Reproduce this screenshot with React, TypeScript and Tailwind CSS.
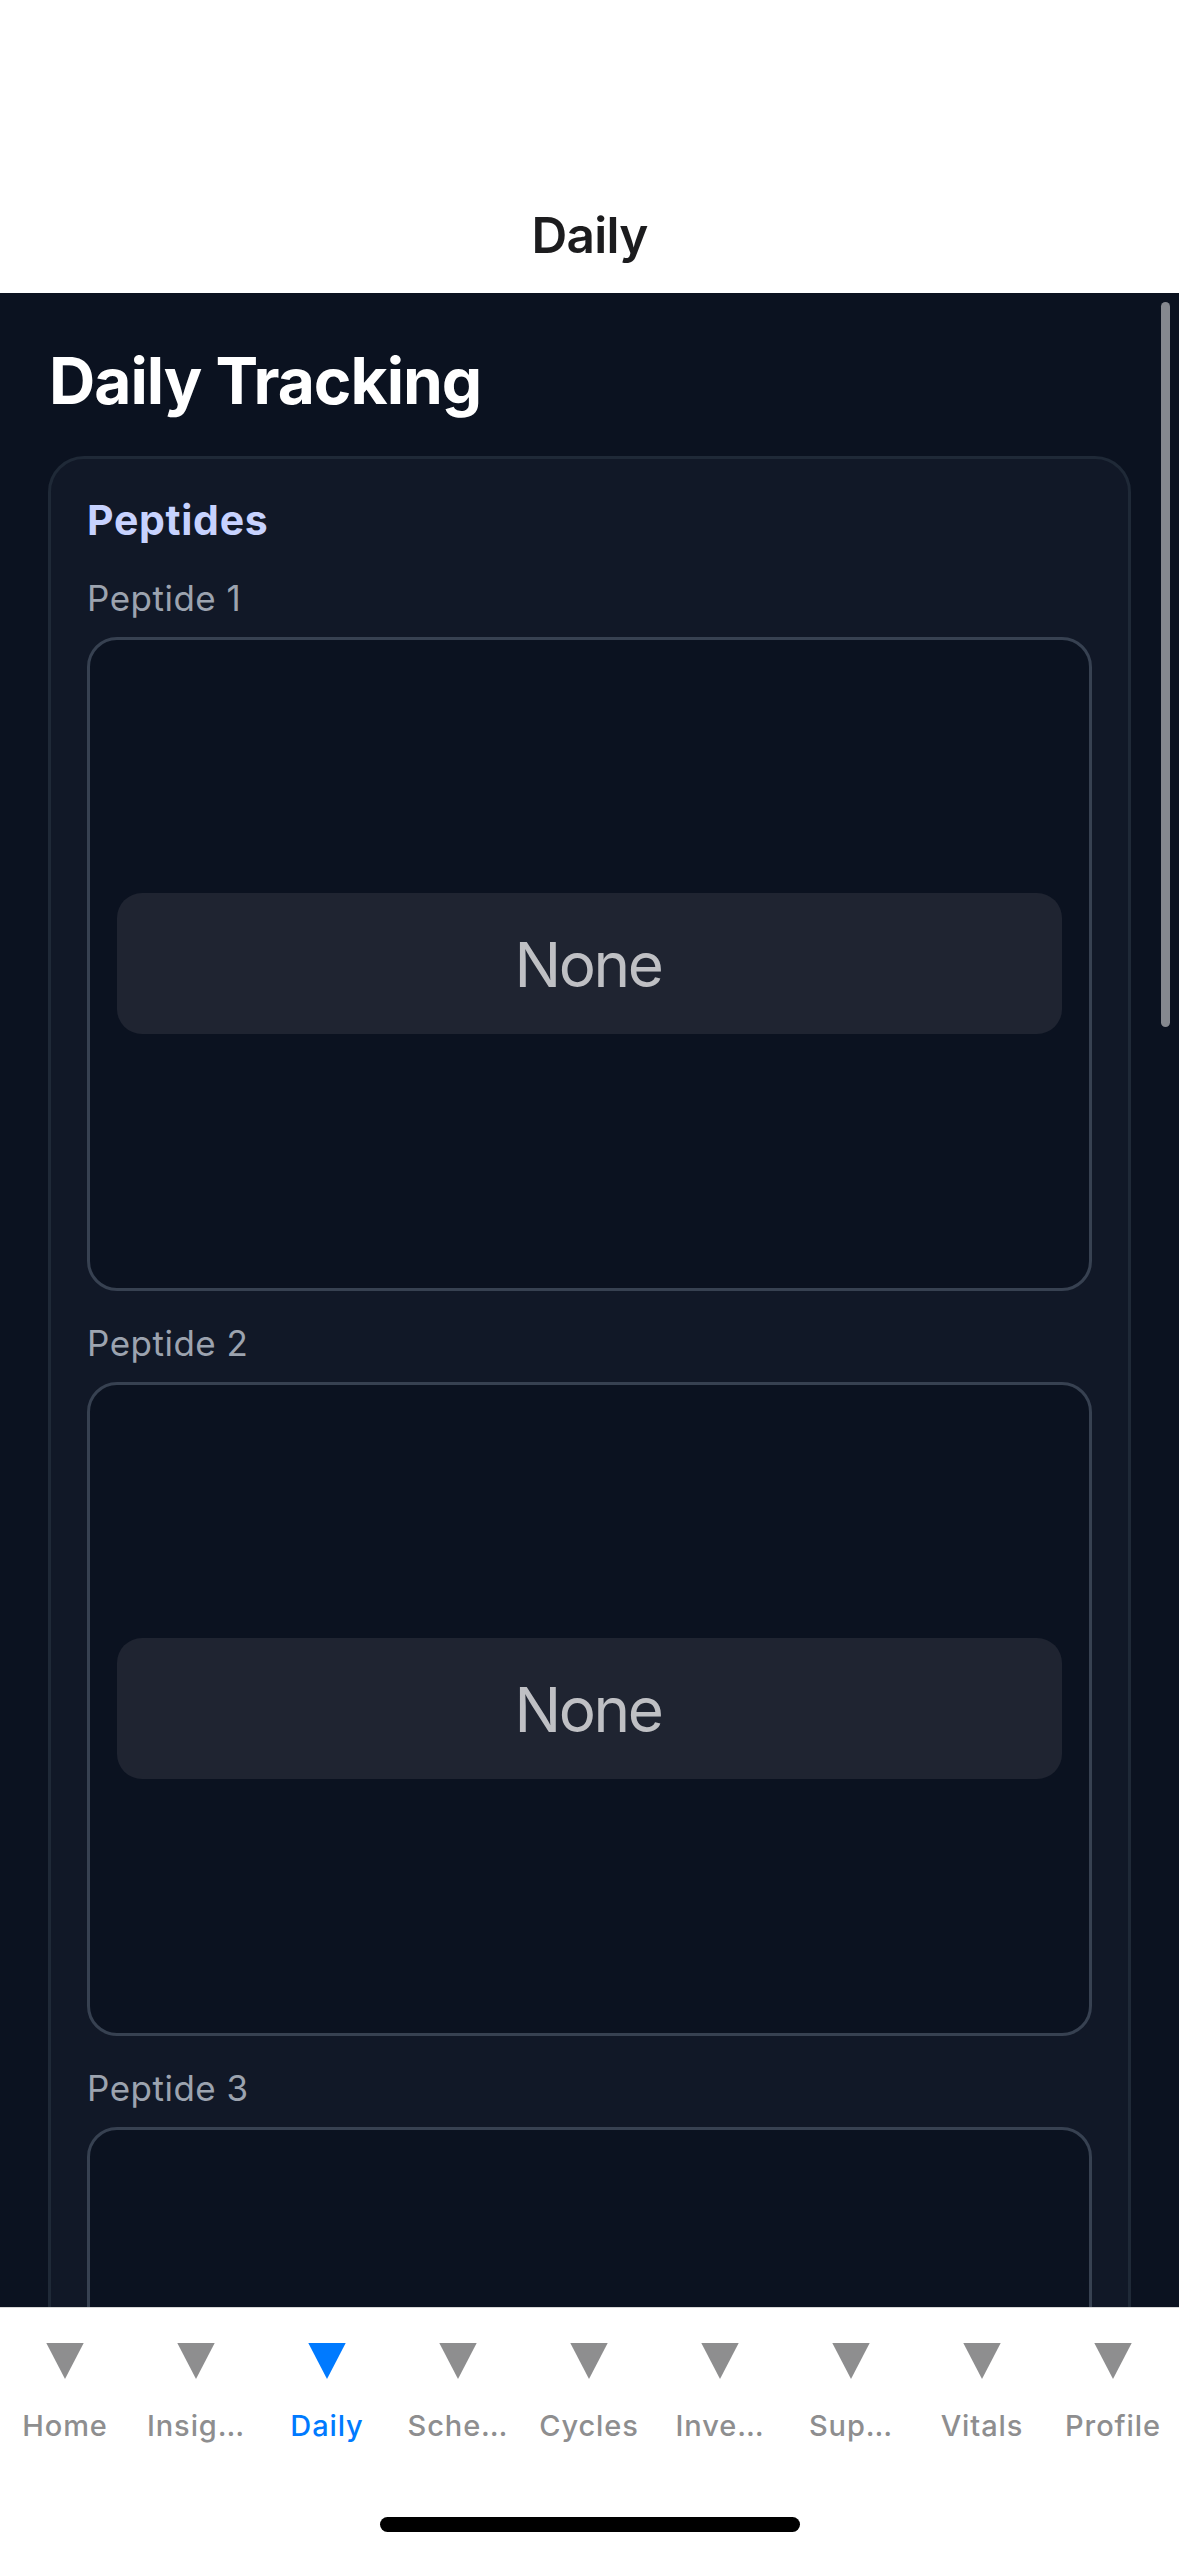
type Peptide = { label: string; value?: string };

const peptides: Peptide[] = [
  { label: "Peptide 1", value: "None" },
  { label: "Peptide 2", value: "None" },
  { label: "Peptide 3" },
];

const tabs = [
  { label: "Home" },
  { label: "Insig…" },
  { label: "Daily", active: true },
  { label: "Sche…" },
  { label: "Cycles" },
  { label: "Inve…" },
  { label: "Sup…" },
  { label: "Vitals" },
  { label: "Profile" },
];

function PeptidePicker({ label, value }: Peptide) {
  return (
    <div className="mb-[31px] shrink-0">
      <div className="mb-[18px] text-[35px] leading-[42px] tracking-[0.5px] text-[#9ca3af]">
        {label}
      </div>
      <div className="flex h-[654px] items-center rounded-[30px] border-3 border-[#374151] bg-[#0b1220] px-[27px] pb-px">
        {value && (
          <div className="flex h-[141px] flex-1 items-center justify-center rounded-[25px] bg-[#1f2431] pt-[2px] pr-[3px] text-[62px] leading-none tracking-[-2.4px] text-[#bfc0c4]">
            {value}
          </div>
        )}
      </div>
    </div>
  );
}

function TabBar() {
  return (
    <nav className="flex h-[249px] shrink-0 flex-col border-t border-[#d8d8d8] bg-white">
      <div className="grid grid-cols-9 pt-[35px]">
        {tabs.map((tab) => (
          <div
            key={tab.label}
            className={
              tab.active
                ? "flex flex-col items-center text-[#007aff]"
                : "flex flex-col items-center text-[#8e8e8f]"
            }
          >
            <svg className="mr-[2px] h-9 w-[38px]" viewBox="0 0 38 36" fill="currentColor">
              <path d="M0.3 0H37.7L19 36Z" />
            </svg>
            <span className="mt-[29px] mr-px text-[29px] leading-9 font-[480] tracking-[0.9px]">
              {tab.label}
            </span>
          </div>
        ))}
      </div>
      <div className="mx-auto mt-auto mb-6 h-[15px] w-[420px] rounded-full bg-black" />
    </nav>
  );
}

export default function App() {
  return (
    <div className="flex h-[2556px] w-[1179px] flex-col overflow-hidden bg-white font-['Inter',sans-serif]">
      <header className="h-[293px] shrink-0 pt-[177px] text-center text-[49.5px] leading-[116px] font-semibold tracking-[-0.7px] text-[#1c1c1e]">
        Daily
      </header>
      <main className="relative flex min-h-0 flex-1 flex-col overflow-hidden bg-[#0b1220] px-12 pt-[49px]">
        <h1 className="mb-9 ml-px shrink-0 text-[64px] leading-[78px] font-bold tracking-[-1px] text-white">
          Daily Tracking
        </h1>
        <section className="shrink-0 rounded-[36px] border-3 border-[#1f2937] bg-[#111827] px-9 pt-9">
          <h2 className="mb-8 text-[41px] leading-[50px] font-bold tracking-[0.7px] text-[#c7d2fe]">
            Peptides
          </h2>
          {peptides.map((peptide) => (
            <PeptidePicker key={peptide.label} {...peptide} />
          ))}
        </section>
        <div className="absolute top-[9px] right-[9px] h-[725px] w-[9px] rounded-full bg-[#85888f]" />
      </main>
      <TabBar />
    </div>
  );
}
